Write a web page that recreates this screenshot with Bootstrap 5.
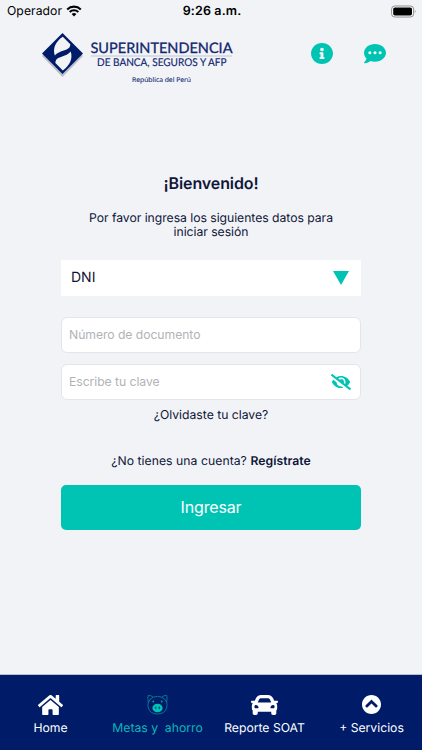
<!DOCTYPE html>
<html lang="es">
<head>
<meta charset="utf-8">
<meta name="viewport" content="width=device-width, initial-scale=1">
<title>Superintendencia de Banca, Seguros y AFP</title>
<link href="https://cdn.jsdelivr.net/npm/bootstrap@5.3.0/dist/css/bootstrap.min.css" rel="stylesheet">
<style>
:root{--navy:#001c69;--teal:#00c4b3;--ink:#0f1638}
body{font-family:Inter,"Liberation Sans",sans-serif;background:#f1f3f7;color:var(--ink);height:750px;overflow:hidden;font-size:12.2px;line-height:14px;letter-spacing:0;text-rendering:geometricPrecision}
svg{display:block;flex:none}
.statusbar{height:22px;padding:0 5px 0 7px;color:#000;letter-spacing:.05px}
.statusbar>div{flex:1 1 0}
.clock{font-size:12.5px;letter-spacing:.15px;padding-top:2px}
.topbar{height:68px;padding:8px 36px 0 40px}
.tools{padding-top:13px;gap:31px}
.login{width:300px;margin-left:61px;padding-top:84px}
.welcome{font-size:16px;line-height:18px;letter-spacing:-.1px;margin-bottom:19px}
.intro{margin-bottom:21px;padding:0 20px;letter-spacing:-.03px}
.doc-type{height:36px;padding:0 12px 1px 10px;font-size:14px;margin-bottom:21px}
.entry{height:36px;border:1px solid #e3e5e9;border-radius:6px;background:#fff;padding:0 9px 0 7px}
.doc-number{margin-bottom:11px}
.entry input{font-size:12.2px;letter-spacing:-.05px;line-height:18px}
.entry input::placeholder{color:#b2b3b6;opacity:1}
.forgot{margin-top:8px}
.register{margin-top:32px;letter-spacing:.05px}
.btn-enter{--bs-btn-color:#fff;--bs-btn-bg:var(--teal);--bs-btn-hover-bg:#00ac9d;--bs-btn-hover-color:#fff;height:45px;margin-top:17px;font-size:16px;border:0;border-radius:5px;letter-spacing:-.15px;padding-bottom:8px}
.tabs{height:76px;background:var(--navy);border-top:1px solid #b9bfd2;padding-top:19px}
.tab-item{flex:0 0 107px;color:#fff;gap:6px;white-space:pre}
.tab-item:first-child{flex-basis:104px;padding-right:3px}
.tab-item.current{color:#0cb5b8}
.tab-item .glyph{height:21px}
</style>
</head>
<body class="d-flex flex-column">
<div class="statusbar d-flex align-items-center">
  <div class="d-flex align-items-center gap-1">
    <span>Operador</span>
    <svg width="16" height="12" viewBox="0 0 16 12"><path d="M1.2 4.4a9.8 9.8 0 0 1 13.6 0M3.7 7a6.2 6.2 0 0 1 8.6 0" fill="none" stroke="#000" stroke-width="2.1"/><path d="M8 11.6 5.6 9.1a3.5 3.5 0 0 1 4.8 0z"/></svg>
  </div>
  <span class="clock fw-semibold">9:26 a.m.</span>
  <div class="d-flex justify-content-end">
    <svg width="26" height="13" viewBox="0 0 26 13"><rect x=".6" y="1" width="22" height="11" rx="3.2" fill="#fff" stroke="#8b8c8f"/><rect x="2.2" y="2.6" width="18.8" height="7.8" rx="1.7"/><path d="M23.9 4.8q1.5 1.7 0 3.4z" fill="#8b8c8f"/></svg>
  </div>
</div>
<header class="topbar d-flex justify-content-between align-items-start">
  <svg width="196" height="58" viewBox="40 30 196 58" role="img" aria-label="Superintendencia de Banca, Seguros y AFP">
    <path d="M42 56 62.5 36 83 56 62.5 77z" fill="#b9bdc6"/>
    <path d="M42 53.5 62.5 33 83 53.5 62.5 74z" fill="#001c69"/>
    <path d="M62.800 36.800 70.300 44.300C70.300 47.500 68.500 49 64.500 50.200 60 51.500 57 53 54.800 55.500 52.500 48.500 55.500 41.500 62.800 36.800z" fill="#f1f3f7"/>
    <path d="M62.800 70.400 55.400 63C55.400 59.800 57 58.300 61 57 65.500 55.500 68.500 54 70.700 51.500 73 58.500 70 65.500 62.800 70.400z" fill="#f1f3f7"/>
    <path d="M91 56H232" stroke="#b4b9c8" stroke-width=".8"/>
    <g fill="#12276e" style="letter-spacing:0">
      <text x="90.5" y="53.2" font-family="Lato,sans-serif" font-size="14.5" stroke="#12276e" stroke-width=".3" textLength="142" lengthAdjust="spacingAndGlyphs">SUPERINTENDENCIA</text>
      <text x="97" y="66" font-family="Lato,sans-serif" font-size="10.8" stroke="#12276e" stroke-width=".15" textLength="129.5" lengthAdjust="spacingAndGlyphs">DE BANCA, SEGUROS Y AFP</text>
      <text x="132" y="82.3" font-family="'Open Sans',sans-serif" font-size="6.6" font-weight="500" stroke="#12276e" stroke-width=".12" textLength="59" lengthAdjust="spacingAndGlyphs">República del Perú</text>
    </g>
  </svg>
  <div class="tools d-flex">
    <svg width="22" height="21" viewBox="8 8 496 496" preserveAspectRatio="none" fill="#00c4b3"><path d="M256 8C119.043 8 8 119.083 8 256c0 136.997 111.043 248 248 248s248-111.003 248-248C504 119.083 392.957 8 256 8zm0 110c23.196 0 42 18.804 42 42s-18.804 42-42 42-42-18.804-42-42 18.804-42 42-42zm56 254c0 6.627-5.373 12-12 12h-88c-6.627 0-12-5.373-12-12v-24c0-6.627 5.373-12 12-12h12v-64h-12c-6.627 0-12-5.373-12-12v-24c0-6.627 5.373-12 12-12h64c6.627 0 12 5.373 12 12v100h12c6.627 0 12 5.373 12 12v24z"/></svg>
    <svg width="22" height="21" viewBox="0 16 512 480" fill="#00c4b3"><path d="M256 32C114.6 32 0 125.1 0 240c0 49.6 21.4 95 57 130.7C44.5 421.1 2.7 466 2.2 466.5c-2.2 2.3-2.8 5.7-1.5 8.7S4.8 480 8 480c66.3 0 116-31.8 140.6-51.4 32.7 12.3 69 19.4 107.4 19.4 141.4 0 256-93.1 256-208S397.4 32 256 32z"/><g fill="#fff"><circle cx="136" cy="240" r="35"/><circle cx="256" cy="240" r="35"/><circle cx="376" cy="240" r="35"/></g></svg>
  </div>
</header>
<main class="login flex-grow-1 text-center">
  <h1 class="welcome fw-semibold">¡Bienvenido!</h1>
  <p class="intro">Por favor ingresa los siguientes datos para iniciar sesión</p>
  <div class="doc-type bg-white d-flex justify-content-between align-items-center">
    <span>DNI</span>
    <svg width="16" height="15" viewBox="0 0 16 15"><path d="M0 1h16L8 15z" fill="#00c4b3"/></svg>
  </div>
  <div class="entry d-flex align-items-center doc-number">
    <input class="form-control-plaintext p-0" type="text" placeholder="Número de documento" aria-label="Número de documento">
  </div>
  <div class="entry d-flex align-items-center">
    <input class="form-control-plaintext p-0" type="password" placeholder="Escribe tu clave" aria-label="Escribe tu clave">
    <svg width="20" height="16" viewBox="0 0 640 512" fill="#00c4b3"><path d="M320 400c-75.850 0-137.250-58.710-142.900-133.110L72.200 185.820c-13.790 17.300-26.480 35.590-36.720 55.590a32.350 32.350 0 0 0 0 29.190C89.710 376.410 197.070 448 320 448c26.910 0 52.870-4 77.890-10.460L346 397.390a144.130 144.130 0 0 1-26 2.610zm313.820 58.100l-110.550-85.440a331.250 331.250 0 0 0 81.250-102.070 32.350 32.350 0 0 0 0-29.190C550.290 135.590 442.930 64 320 64a308.150 308.150 0 0 0-147.320 37.700L45.460 3.370A16 16 0 0 0 23 6.180L3.370 31.450A16 16 0 0 0 6.180 53.900l588.360 454.730a16 16 0 0 0 22.460-2.810l19.640-25.270a16 16 0 0 0-2.820-22.450zm-183.720-142l-39.300-30.380A94.750 94.750 0 0 0 416 256a94.760 94.760 0 0 0-121.310-92.210A47.650 47.650 0 0 1 304 192a46.640 46.640 0 0 1-1.540 10l-73.610-56.890A142.310 142.310 0 0 1 320 112a143.920 143.920 0 0 1 144 144c0 21.630-5.290 41.790-13.900 60.110z"/></svg>
  </div>
  <div class="forgot">¿Olvidaste tu clave?</div>
  <div class="register">¿No tienes una cuenta? <span class="fw-semibold">Regístrate</span></div>
  <button class="btn btn-enter w-100" type="button">Ingresar</button>
</main>
<nav class="tabs d-flex">
  <div class="tab-item d-flex flex-column align-items-center"><div class="glyph d-flex align-items-center"><svg width="25" height="20" viewBox="0 32 576 448" preserveAspectRatio="none" fill="#fff"><path d="M280.370 148.260L96 300.110V464a16 16 0 0 0 16 16l112.060-.29a16 16 0 0 0 15.920-16V368a16 16 0 0 1 16-16h64a16 16 0 0 1 16 16v95.640a16 16 0 0 0 16 16.050L464 480a16 16 0 0 0 16-16V300L295.670 148.260a12.190 12.190 0 0 0-15.300 0zM571.600 251.470L488 182.560V44.050a12 12 0 0 0-12-12h-56a12 12 0 0 0-12 12v72.610L318.470 43a48 48 0 0 0-61 0L4.340 251.470a12 12 0 0 0-1.600 16.900l25.500 31A12 12 0 0 0 45.150 301l235.220-193.740a12.190 12.190 0 0 1 15.300 0L530.900 301a12 12 0 0 0 16.900-1.600l25.500-31a12 12 0 0 0-1.700-16.930z"/></svg></div><span>Home</span></div>
  <div class="tab-item current d-flex flex-column align-items-center"><div class="glyph d-flex align-items-center"><svg width="21" height="21" viewBox="0 0 21 21"><path d="M1.300 8.500Q.6 3.500 1.200 1.500q3-.4 5 1.700 4.300-1.700 8.600 0 2-2.100 5-1.700.6 2-.1 7 .8 2.700-.1 5.700-2 5.800-9.100 5.800t-9.100-5.800q-.9-3-.1-5.700zM1.300 8.500Q2.500 5 6.200 3.200M19.700 8.500Q18.500 5 14.800 3.200" fill="none" stroke="#088c9c" stroke-width=".8"/><circle cx="6.300" cy="7.500" r=".9" fill="#08a4a9"/><circle cx="14.700" cy="7.500" r=".9" fill="#08a4a9"/><ellipse cx="10.500" cy="14" rx="5.100" ry="4.300" fill="#00c4b3"/><ellipse cx="8.700" cy="13.800" rx=".9" ry="1.400" fill="#06598a"/><ellipse cx="12.300" cy="13.800" rx=".9" ry="1.400" fill="#06598a"/></svg></div><span>Metas y  ahorro</span></div>
  <div class="tab-item d-flex flex-column align-items-center"><div class="glyph d-flex align-items-center"><svg width="27" height="20" viewBox="0 64 512 384" preserveAspectRatio="none" fill="#fff"><path d="M499.990 176h-59.870l-16.640-41.600C406.380 91.630 365.570 64 319.500 64h-127c-46.060 0-86.880 27.630-103.990 70.400L71.870 176H12.010C4.200 176-1.530 183.340.37 190.910l6 24C7.700 220.250 12.500 224 18.010 224h20.070C24.650 235.730 16 252.780 16 272v48c0 16.120 6.160 30.670 16 41.930V416c0 17.670 14.330 32 32 32h32c17.670 0 32-14.330 32-32v-32h256v32c0 17.670 14.330 32 32 32h32c17.670 0 32-14.330 32-32v-54.070c9.840-11.250 16-25.800 16-41.930v-48c0-19.220-8.650-36.270-22.070-48H494c5.510 0 10.310-3.750 11.640-9.090l6-24c1.890-7.570-3.840-14.910-11.650-14.910zm-352.060-17.830c7.290-18.220 24.940-30.170 44.570-30.170h127c19.630 0 37.280 11.950 44.570 30.170L384 208H128l19.930-49.830zM96 319.800c-19.200 0-32-12.760-32-31.900S76.800 256 96 256s48 28.710 48 47.850-28.800 15.950-48 15.950zm320 0c-19.200 0-48 3.190-48-15.950S396.800 256 416 256s32 12.760 32 31.900-12.800 31.900-32 31.900z"/></svg></div><span>Reporte SOAT</span></div>
  <div class="tab-item d-flex flex-column align-items-center"><div class="glyph d-flex align-items-center"><svg width="19" height="19" viewBox="8 8 496 496" fill="#fff"><path d="M8 256C8 119 119 8 256 8s248 111 248 248-111 248-248 248S8 393 8 256zm231-113.900L103.500 277.600c-9.400 9.400-9.400 24.600 0 33.900l17 17c9.400 9.400 24.600 9.400 33.900 0L256 226.900l101.600 101.600c9.400 9.400 24.600 9.400 33.900 0l17-17c9.400-9.400 9.400-24.600 0-33.900L273 142.100c-9.400-9.400-24.600-9.400-34 0z"/></svg></div><span>+ Servicios</span></div>
</nav>
<script src="https://cdn.jsdelivr.net/npm/bootstrap@5.3.0/dist/js/bootstrap.bundle.min.js"></script>
</body>
</html>
